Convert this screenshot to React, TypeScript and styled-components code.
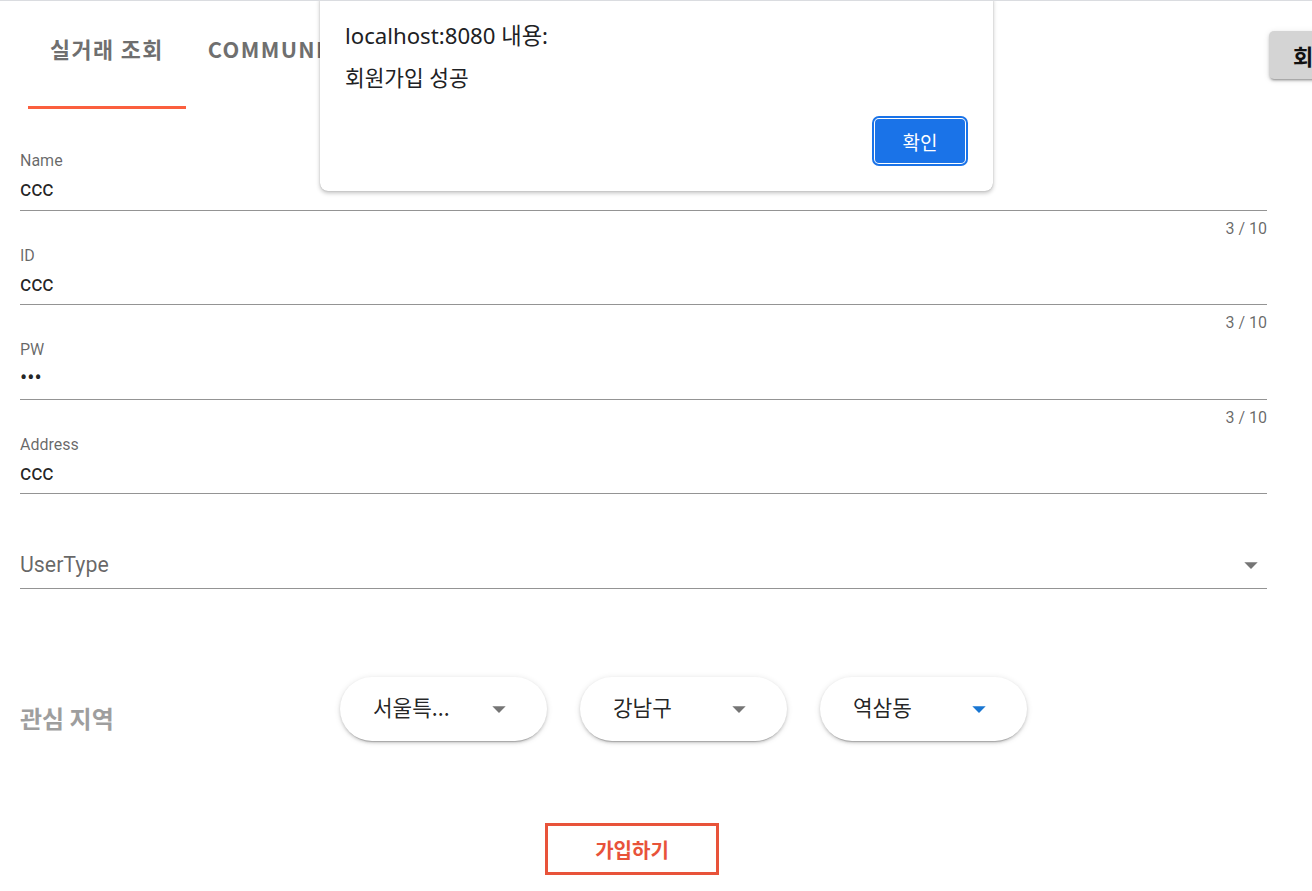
import React from "react";
import styled, { createGlobalStyle, css } from "styled-components";

const GlobalStyle = createGlobalStyle`
  html, body {
    margin: 0;
    padding: 0;
    background: #ffffff;
    overflow: hidden;
  }
  body {
    font-family: Roboto, "Noto Sans CJK KR", sans-serif;
    color: rgba(0, 0, 0, 0.87);
  }
  * { box-sizing: border-box; }
`;

const Page = styled.div`
  position: relative;
  width: 1312px;
  height: 891px;
  border-top: 1px solid #dadce0;
  overflow: hidden;
`;

const Header = styled.header`
  display: grid;
  grid-template-columns: 1fr 43px;
  height: 108px;
`;

const Tabs = styled.nav`
  display: flex;
  padding-left: 28px;
`;

const Tab = styled.div<{ $active?: boolean }>`
  position: relative;
  height: 108px;
  padding: 33px 22px 0;
  font-family: "Noto Sans CJK KR", sans-serif;
  font-weight: 700;
  font-size: 21.8px;
  line-height: 30px;
  letter-spacing: 1.4px;
  color: #6f6f6f;
  white-space: nowrap;
  ${(p) =>
    p.$active &&
    css`
      &::after {
        content: "";
        position: absolute;
        left: 0;
        right: 0;
        bottom: 0;
        height: 3px;
        background: #fb5f3e;
      }
    `}
`;

const SideSlot = styled.div`
  padding-top: 30px;
  overflow: visible;
`;

const AuthButton = styled.button`
  height: 48px;
  padding: 0 24px;
  border: none;
  border-radius: 5px;
  background: #d4d4d4;
  box-shadow: 0 3px 2px -2px rgba(0, 0, 0, 0.25), 0 2px 3px 0 rgba(0, 0, 0, 0.16),
    0 1px 6px 0 rgba(0, 0, 0, 0.1);
  font-family: "Noto Sans CJK KR", sans-serif;
  font-weight: 700;
  font-size: 22px;
  color: #111;
  white-space: nowrap;
`;

const Form = styled.main`
  width: 1267px;
  padding: 44px 0 0 20px;
`;

const Field = styled.div`
  display: flex;
  flex-direction: column;
  height: 94.5px;
`;

const FieldLabel = styled.label`
  font-size: 16px;
  line-height: 16px;
  height: 16px;
  color: rgba(0, 0, 0, 0.6);
`;

const FieldValue = styled.div`
  margin-top: 7px;
  height: 26.67px;
  padding-bottom: 7.33px;
  font-size: 21.33px;
  line-height: 26.67px;
  color: rgba(0, 0, 0, 0.87);
  border-bottom: 1px solid rgba(0, 0, 0, 0.42);
  box-sizing: content-box;
`;

const Counter = styled.div`
  margin-top: 10px;
  height: 16px;
  font-size: 16px;
  line-height: 16px;
  text-align: right;
  color: rgba(0, 0, 0, 0.6);
`;

const SelectField = styled.div`
  display: flex;
  align-items: flex-start;
  padding-top: 21.4px;
  padding-bottom: 6.9px;
  border-bottom: 1px solid rgba(0, 0, 0, 0.42);
`;

const Placeholder = styled.div`
  flex: 1;
  font-size: 21.33px;
  line-height: 26.67px;
  color: rgba(0, 0, 0, 0.6);
`;

const IconBox = styled.span<{ $color?: string }>`
  display: inline-flex;
  align-items: center;
  justify-content: center;
  width: 32px;
  height: 32px;
  color: ${(p) => p.$color ?? "rgba(0, 0, 0, 0.54)"};
`;

const SelectIcon = styled(IconBox)`
  margin-top: -3px;
  margin-right: 0;
`;

const RegionRow = styled.section`
  display: flex;
  align-items: flex-start;
  margin-top: 88px;
`;

const RegionLabel = styled.div`
  width: 320px;
  padding-top: 26px;
  font-family: "Noto Sans CJK KR", sans-serif;
  font-weight: 700;
  font-size: 24px;
  line-height: 30px;
  color: #9e9e9e;
`;

const Pills = styled.div`
  display: flex;
  gap: 33px;
`;

const Pill = styled.div`
  display: flex;
  align-items: center;
  width: 207px;
  height: 64px;
  padding: 0 32px 0 33px;
  border-radius: 32px;
  background: #fff;
  box-shadow: 0 3px 1px -2px rgba(0, 0, 0, 0.2), 0 2px 3px 0 rgba(0, 0, 0, 0.14),
    0 1px 6px 0 rgba(0, 0, 0, 0.12);
`;

const PillText = styled.span`
  flex: 1;
  font-family: "Noto Sans CJK KR", sans-serif;
  font-size: 21.33px;
  line-height: 28px;
  margin-top: -4px;
  color: rgba(0, 0, 0, 0.87);
  white-space: nowrap;
`;

const SubmitRow = styled.div`
  display: flex;
  margin-top: 82px;
  padding-left: 525px;
`;

const SubmitButton = styled.button`
  width: 174px;
  height: 52px;
  border: 3px solid #e8533a;
  background: #fff;
  font-family: "Noto Sans CJK KR", sans-serif;
  font-weight: 700;
  font-size: 20px;
  color: #e8533a;
  padding: 0;
`;

/* Browser alert dialog overlay */
const Dialog = styled.div`
  position: absolute;
  left: 320px;
  top: -8px;
  width: 673px;
  height: 198px;
  display: flex;
  flex-direction: column;
  padding: 28px 25px 0 25px;
  background: #fff;
  border-radius: 8px;
  box-shadow: 0 2px 4px rgba(0, 0, 0, 0.25), 0 0 1px rgba(0, 0, 0, 0.3);
  font-family: "Noto Sans", "Noto Sans CJK KR", sans-serif;
  color: #202124;
`;

const DialogTitle = styled.div`
  font-size: 22.2px;
  line-height: 30px;
`;

const DialogMessage = styled.div`
  margin-top: 11.5px;
  font-size: 21.4px;
  line-height: 30px;
`;

const DialogActions = styled.div`
  display: flex;
  justify-content: flex-end;
  margin-top: 26.5px;
  padding-right: 3px;
`;

const OkButton = styled.button`
  width: 90px;
  height: 44px;
  border: none;
  border-radius: 4px;
  background: #1a73e8;
  outline: 2px solid #1a73e8;
  outline-offset: 1px;
  color: #fff;
  font-family: "Noto Sans CJK KR", sans-serif;
  font-size: 19px;
  padding: 0;
`;

const MenuDown = () => (
  <svg width="32" height="32" viewBox="0 0 24 24" fill="currentColor">
    <path d="M7 10l5 5 5-5z" />
  </svg>
);

const fields = [
  { label: "Name", value: "ccc", counter: "3 / 10" },
  { label: "ID", value: "ccc", counter: "3 / 10" },
  { label: "PW", value: "•••", counter: "3 / 10" },
  { label: "Address", value: "ccc", counter: "" },
];

const regions = [
  { text: "서울특...", color: undefined },
  { text: "강남구", color: undefined },
  { text: "역삼동", color: "#1976d2" },
];

export default function App() {
  return (
    <>
      <GlobalStyle />
      <Page>
        <Header>
          <Tabs>
            <Tab $active>실거래 조회</Tab>
            <Tab>COMMUNITY</Tab>
          </Tabs>
          <SideSlot>
            <AuthButton>회원가입</AuthButton>
          </SideSlot>
        </Header>
        <Form>
          {fields.map((f) => (
            <Field key={f.label}>
              <FieldLabel>{f.label}</FieldLabel>
              <FieldValue>{f.value}</FieldValue>
              <Counter>{f.counter}</Counter>
            </Field>
          ))}
          <SelectField>
            <Placeholder>UserType</Placeholder>
            <SelectIcon>
              <MenuDown />
            </SelectIcon>
          </SelectField>
          <RegionRow>
            <RegionLabel>관심 지역</RegionLabel>
            <Pills>
              {regions.map((r) => (
                <Pill key={r.text}>
                  <PillText>{r.text}</PillText>
                  <IconBox $color={r.color}>
                    <MenuDown />
                  </IconBox>
                </Pill>
              ))}
            </Pills>
          </RegionRow>
          <SubmitRow>
            <SubmitButton>가입하기</SubmitButton>
          </SubmitRow>
        </Form>
        <Dialog role="alertdialog">
          <DialogTitle>localhost:8080 내용:</DialogTitle>
          <DialogMessage>회원가입 성공</DialogMessage>
          <DialogActions>
            <OkButton>확인</OkButton>
          </DialogActions>
        </Dialog>
      </Page>
    </>
  );
}
